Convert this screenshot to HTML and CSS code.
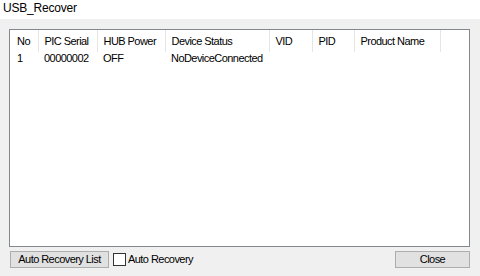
FILE: index.html
```html
<!DOCTYPE html>
<html>
<head>
<meta charset="utf-8">
<link rel="stylesheet" href="styles.css">
</head>
<body>
<div class="window">
  <div class="titlebar">USB_Recover</div>
  <div class="main">
    <div class="listview">
      <table class="grid">
        <thead>
          <tr>
            <th class="c-no">No</th>
            <th class="c-serial">PIC Serial</th>
            <th class="c-hub">HUB Power</th>
            <th class="c-status">Device Status</th>
            <th class="c-vid">VID</th>
            <th class="c-pid">PID</th>
            <th class="c-name">Product Name</th>
            <th class="c-rest"></th>
          </tr>
        </thead>
        <tbody>
          <tr>
            <td>1</td>
            <td>00000002</td>
            <td>OFF</td>
            <td>NoDeviceConnected</td>
            <td></td>
            <td></td>
            <td></td>
            <td></td>
          </tr>
        </tbody>
      </table>
    </div>
    <div class="footer">
      <button class="btn btn-list">Auto Recovery List</button>
      <label class="check"><span class="box"></span>Auto Recovery</label>
      <button class="btn btn-close">Close</button>
    </div>
  </div>
</div>
</body>
</html>
```
FILE: styles.css
```css
* { box-sizing: border-box; }
html, body {
  margin: 0;
  padding: 0;
  background: #f0f0f0;
}
body {
  font-family: "Liberation Sans", Arial, sans-serif;
  font-size: 11px;
  letter-spacing: -0.55px;
  color: #000;
}
.window {
  width: 480px;
  height: 276px;
  display: flex;
  flex-direction: column;
}
.titlebar {
  height: 19px;
  background: #ffffff;
  padding: 2px 0 0 3px;
  font-size: 12px;
  letter-spacing: -0.2px;
  line-height: 12px;
}
.main {
  flex: 1;
  display: flex;
  flex-direction: column;
  padding: 10px 10px 8px 9px;
}
.listview {
  flex: 1;
  background: #ffffff;
  border: 1px solid #828790;
  overflow: hidden;
}
.grid {
  border-collapse: collapse;
  table-layout: fixed;
  width: 430px;
}
.grid th, .grid td {
  padding: 0 0 0 6px;
  text-align: left;
  font-weight: normal;
  white-space: nowrap;
  overflow: hidden;
  vertical-align: top;
  line-height: 13px;
}
.grid th {
  height: 22px;
  padding-top: 5px;
  border-right: 1px solid #e5e5e5;
}
.grid th.c-rest { border-right: none; }
.grid th:first-child, .grid td:first-child { padding-left: 7px; }
.grid td {
  height: 14px;
  padding-top: 0;
}
.c-no { width: 28px; }
.c-serial { width: 59px; }
.c-hub { width: 68px; }
.c-status { width: 104px; }
.c-vid { width: 43px; }
.c-pid { width: 42px; }
.c-name { width: 86px; }
.c-rest { width: 0; }
.footer {
  height: 17px;
  margin-top: 4px;
  display: flex;
  align-items: center;
  padding-left: 1px;
}
.btn {
  font-family: inherit;
  font-size: 11px;
  letter-spacing: -0.55px;
  height: 17px;
  background: #e1e1e1;
  border: 1px solid #adadad;
  padding: 0;
  margin: 0;
  color: #000;
  line-height: 15px;
}
.btn-list { width: 99px; }
.btn-close { width: 75px; margin-left: auto; }
.check {
  display: flex;
  align-items: center;
  margin-left: 4px;
  line-height: 15px;
}
.box {
  width: 13px;
  height: 13px;
  border: 1px solid #333333;
  background: #ffffff;
  margin-right: 2px;
}
```
